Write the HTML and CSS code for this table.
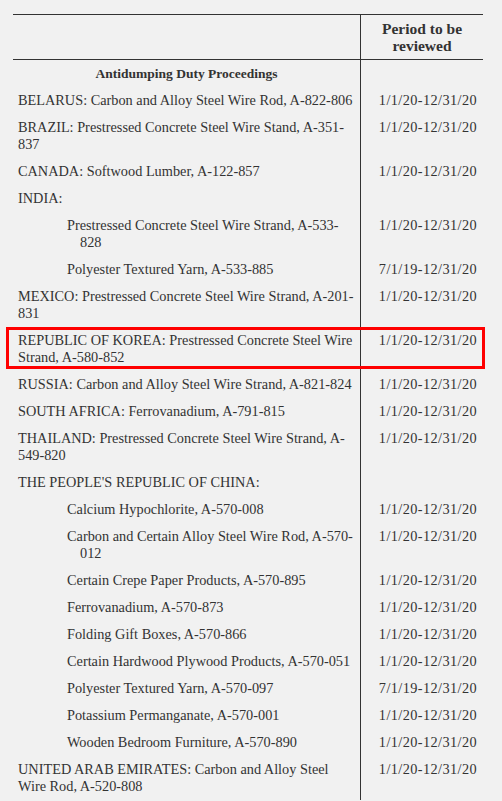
FILE: index.html
```html
<!DOCTYPE html>
<html lang="en">
<head>
    <meta charset="UTF-8">
    <meta name="viewport" content="width=device-width, initial-scale=1.0">
    <title>Administrative Reviews</title>
    <link rel="stylesheet" href="styles.css">
</head>
<body>

    <div class="table-wrap">
        <table class="reviews">
            <thead>
                <tr>
                    <th class="case-col"></th>
                    <th class="period-col">Period to be reviewed</th>
                </tr>
            </thead>
            <tbody>
                <tr>
                    <td class="section-title">Antidumping Duty Proceedings</td>
                    <td></td>
                </tr>
                <tr>
                    <td>BELARUS: Carbon and Alloy Steel Wire Rod, A-822-806</td>
                    <td class="period">1/1/20-12/31/20</td>
                </tr>
                <tr>
                    <td>BRAZIL: Prestressed Concrete Steel Wire Stand, A-351-837</td>
                    <td class="period">1/1/20-12/31/20</td>
                </tr>
                <tr>
                    <td>CANADA: Softwood Lumber, A-122-857</td>
                    <td class="period">1/1/20-12/31/20</td>
                </tr>
                <tr>
                    <td>INDIA:</td>
                    <td></td>
                </tr>
                <tr>
                    <td class="sub">Prestressed Concrete Steel Wire Strand, A-533-828</td>
                    <td class="period">1/1/20-12/31/20</td>
                </tr>
                <tr>
                    <td class="sub">Polyester Textured Yarn, A-533-885</td>
                    <td class="period">7/1/19-12/31/20</td>
                </tr>
                <tr>
                    <td>MEXICO: Prestressed Concrete Steel Wire Strand, A-201-831</td>
                    <td class="period">1/1/20-12/31/20</td>
                </tr>
                <tr class="highlighted">
                    <td>REPUBLIC OF KOREA: Prestressed Concrete Steel Wire Strand, A-580-852</td>
                    <td class="period">1/1/20-12/31/20</td>
                </tr>
                <tr>
                    <td>RUSSIA: Carbon and Alloy Steel Wire Strand, A-821-824</td>
                    <td class="period">1/1/20-12/31/20</td>
                </tr>
                <tr>
                    <td>SOUTH AFRICA: Ferrovanadium, A-791-815</td>
                    <td class="period">1/1/20-12/31/20</td>
                </tr>
                <tr>
                    <td>THAILAND: Prestressed Concrete Steel Wire Strand, A-549-820</td>
                    <td class="period">1/1/20-12/31/20</td>
                </tr>
                <tr>
                    <td>THE PEOPLE'S REPUBLIC OF CHINA:</td>
                    <td></td>
                </tr>
                <tr>
                    <td class="sub">Calcium Hypochlorite, A-570-008</td>
                    <td class="period">1/1/20-12/31/20</td>
                </tr>
                <tr>
                    <td class="sub">Carbon and Certain Alloy Steel Wire Rod, A-570-012</td>
                    <td class="period">1/1/20-12/31/20</td>
                </tr>
                <tr>
                    <td class="sub">Certain Crepe Paper Products, A-570-895</td>
                    <td class="period">1/1/20-12/31/20</td>
                </tr>
                <tr>
                    <td class="sub">Ferrovanadium, A-570-873</td>
                    <td class="period">1/1/20-12/31/20</td>
                </tr>
                <tr>
                    <td class="sub">Folding Gift Boxes, A-570-866</td>
                    <td class="period">1/1/20-12/31/20</td>
                </tr>
                <tr>
                    <td class="sub">Certain Hardwood Plywood Products, A-570-051</td>
                    <td class="period">1/1/20-12/31/20</td>
                </tr>
                <tr>
                    <td class="sub">Polyester Textured Yarn, A-570-097</td>
                    <td class="period">7/1/19-12/31/20</td>
                </tr>
                <tr>
                    <td class="sub">Potassium Permanganate, A-570-001</td>
                    <td class="period">1/1/20-12/31/20</td>
                </tr>
                <tr>
                    <td class="sub">Wooden Bedroom Furniture, A-570-890</td>
                    <td class="period">1/1/20-12/31/20</td>
                </tr>
                <tr>
                    <td>UNITED ARAB EMIRATES: Carbon and Alloy Steel Wire Rod, A-520-808</td>
                    <td class="period">1/1/20-12/31/20</td>
                </tr>
            </tbody>
        </table>

        <!-- highlight box drawn over the Korea row -->
        <div class="highlight-box"></div>
    </div>

</body>
</html>
```

FILE: styles.css
```css
body {
    margin: 0;
    padding: 14px 19px 0 13px;
    background-color: #f1f1f1;
    font-family: "Liberation Serif", "Times New Roman", serif;
    font-size: 14.3px;
    line-height: 17px;
    color: #333;
}

.table-wrap {
    position: relative;
}

.reviews {
    width: 470px;
    border-collapse: collapse;
    table-layout: fixed;
}

.reviews th {
    font-size: 15.5px;
    font-weight: bold;
    padding: 5px 5px;
    border-top: 1px solid #333;
    border-bottom: 1px solid #333;
}

.case-col {
    width: 337px;
    border-right: 1px solid #333;
}

.period-col {
    text-align: center;
}

.reviews td {
    padding: 5px 5px;
    vertical-align: top;
    text-align: left;
}

.reviews td:first-child {
    border-right: 1px solid #333;
}

.section-title {
    font-size: 13.5px;
    font-weight: bold;
    text-align: center !important;
}

.sub {
    padding-left: 67px !important;
    text-indent: -13px;
}

.period {
    text-align: right !important;
    padding-right: 6px !important;
    white-space: nowrap;
    letter-spacing: 0.4px;
}

.highlight-box {
    position: absolute;
    left: -7px;
    top: 313px;
    width: 473px;
    height: 36px;
    border: 3px solid #ff0000;
    pointer-events: none;
}
```
